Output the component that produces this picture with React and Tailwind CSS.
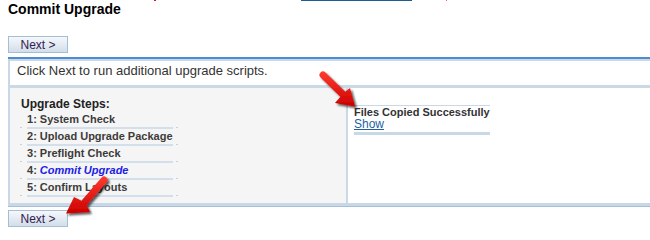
import React from 'react'

const steps = [
  { n: '1', label: 'System Check' },
  { n: '2', label: 'Upload Upgrade Package' },
  { n: '3', label: 'Preflight Check' },
  { n: '4', label: 'Commit Upgrade', current: true },
  { n: '5', label: 'Confirm Layouts' },
]

function NextButton() {
  return (
    <button className="ml-[8px] flex h-[17px] w-[60px] items-center justify-center border border-[#a6bed4] bg-gradient-to-b from-[#f5f8fb] to-[#d2deea] text-[12px] leading-[14px] text-[#33204f]">
      Next &gt;
    </button>
  )
}

// red call-out arrows lying over the page
function Arrows() {
  return (
    <svg className="pointer-events-none absolute left-0 top-0" width="650" height="240" viewBox="0 0 650 240">
      <defs>
        <linearGradient id="red" x1="0" y1="0" x2="0" y2="1">
          <stop offset="0" stopColor="#ff3b2e" />
          <stop offset="1" stopColor="#cc0000" />
        </linearGradient>
        <filter id="shadow" x="-20%" y="-20%" width="150%" height="150%">
          <feDropShadow dx="2" dy="2" stdDeviation="1.2" floodColor="#000" floodOpacity="0.65" />
        </filter>
      </defs>
      <g filter="url(#shadow)" fill="url(#red)">
        <path d="M320.6 77.5 L340.4 96.7 L335 103 L355 106.5 L350 88 L345.2 91.7 L325.4 72.5 A3.4 3.4 0 0 0 320.6 77.5 Z" />
        <path d="M101.4 177.7 L81.4 200.7 L74 197 L66 213.5 L90 212 L86.6 205.3 L106.6 182.3 A3.4 3.4 0 0 0 101.4 177.7 Z" />
      </g>
    </svg>
  )
}

export default function App() {
  return (
    <div className="relative h-[240px] w-[650px] overflow-hidden bg-white font-['Liberation_Sans',Arial,sans-serif] text-[#333]">
      {/* bits of the page above, cut off */}
      <div className="flex h-[1px]">
        <span className="ml-[154px] w-[2px] bg-[#e01010]" />
        <span className="ml-[145px] w-[111px] bg-[#1d5c96]" />
        <span className="ml-[34px] w-[1px] bg-[#f07050]" />
      </div>

      <h1 className="ml-[8px] text-[14px] font-bold leading-[16px] text-black">Commit Upgrade</h1>

      <div className="mt-[19px]">
        <NextButton />
      </div>

      {/* Panel */}
      <div className="ml-[8px] mt-[4px] border-t-2 border-b border-t-[#4d8bd2] border-b-[#a7bfd6]">
        <div className="border-l-2 border-t-2 border-b-[3px] border-[#c9d8e6]">
          <div className="h-[27px] border-b-[3px] border-[#cbd9e7] bg-white pl-[7px] pt-[2px] text-[13px] leading-[16px] text-[#333]">
            Click Next to run additional upgrade scripts.
          </div>

          <div className="flex h-[115px]">
            {/* Steps */}
            <div className="w-[338px] border-r-2 border-[#cbd9e7] bg-[#f5f5f5] pl-[10px] pt-[9px]">
              <div className="ml-[1px] text-[12px] font-bold leading-[15px] text-[#222]">Upgrade Steps:</div>
              {steps.map((s) => (
                <div key={s.n} className="flex h-[17px] items-end">
                  <span className="mb-[1px] h-[1px] w-[2px] bg-[#cfcfcf]" />
                  <div className="ml-[5px] h-full w-[146px] border-b-2 border-[#d3dfea] text-[11px] font-bold leading-[15px] text-[#3c3c3c]">
                    {s.n}:{' '}
                    {s.current ? <span className="italic text-[#2020e8]">{s.label}</span> : s.label}
                  </div>
                  <span className="mb-[1px] ml-[3px] h-[1px] w-[2px] bg-[#cfcfcf]" />
                </div>
              ))}
            </div>

            {/* Result */}
            <div className="flex-1 bg-white pl-[6px] pt-[17px]">
              <div className="w-[136px] border-t border-b-[3px] border-[#c9d8e6] pb-[1px]">
                <div className="text-[11px] font-bold leading-[12px] text-[#333]">Files Copied Successfully</div>
                <div className="text-[12px] leading-[13px]">
                  <a className="text-[#1f5f9f] underline">Show</a>
                </div>
              </div>
            </div>
          </div>
        </div>
      </div>

      <div className="mt-[3px]">
        <NextButton />
      </div>

      <Arrows />
    </div>
  )
}
